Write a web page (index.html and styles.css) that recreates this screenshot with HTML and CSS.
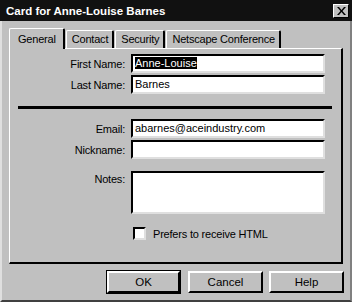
FILE: index.html
```html
<html>
	<head>
		<meta name="viewport" content="width=device-width, initial-scale=1">
		<link rel="stylesheet" href="styles.css">
	</head>
	<body>
		<div class="window">
			<div class="titlebar">
				<span class="title">Card for Anne-Louise Barnes</span>
				<span class="close">
					<svg width="9" height="8" viewBox="0 0 9 8"><path d="M0 0h2l2.5 3 2.5-3h2L5.5 4 9 8H7L4.5 5 2 8H0l3.5-4z" fill="#000"/></svg>
				</span>
			</div>

			<div class="tabs">
				<div class="tab active">General</div>
				<div class="tab">Contact</div>
				<div class="tab">Security</div>
				<div class="tab">Netscape Conference</div>
			</div>

			<div class="panel">
				<div class="fields">
					<label>First Name:</label>
					<div class="input"><span class="selected">Anne-Louise</span></div>
					<label>Last Name:</label>
					<div class="input">Barnes</div>
				</div>

				<div class="rule"></div>

				<div class="fields">
					<label>Email:</label>
					<div class="input">abarnes@aceindustry.com</div>
					<label>Nickname:</label>
					<div class="input"></div>
				</div>

				<div class="fields notes">
					<label>Notes:</label>
					<div class="input textarea"></div>
				</div>

				<div class="check">
					<span class="box"></span>
					<span>Prefers to receive HTML</span>
				</div>
			</div>

			<div class="buttons">
				<button class="default">OK</button>
				<button>Cancel</button>
				<button>Help</button>
			</div>
		</div>
	</body>
</html>
```

FILE: styles.css
```css
* {
	box-sizing: border-box;
	font-family: "Liberation Sans", Arial, sans-serif;
}

body
{
	margin: 0;
	background: #c0c0c0;
}

.window
{
	width: 352px;
	height: 302px;
	background: #c0c0c0;
	border-left: 2px solid #dfdfdf;
	border-right: 2px solid #808080;
	border-bottom: 2px solid #404040;
}

.titlebar
{
	height: 21px;
	background: #111;
	display: flex;
	align-items: center;
	justify-content: space-between;
	padding: 0 3px 0 4px;
	margin-left: -2px;
	margin-right: -2px;
}

.title
{
	color: #fff;
	font-weight: bold;
	font-size: 11.5px;
	padding-left: 2px;
}

.close
{
	width: 16px;
	height: 14px;
	background: #c0c0c0;
	border: 1px solid;
	border-color: #fff #000 #000 #fff;
	display: flex;
	align-items: center;
	justify-content: center;
}

.tabs
{
	display: flex;
	align-items: flex-end;
	margin-top: 7px;
	padding-left: 7px;
	height: 20px;
}

.tab
{
	font-size: 11px;
	letter-spacing: -0.2px;
	height: 18px;
	padding: 2px 4px 0 5px;
	margin-right: 1px;
	border: 1px solid #fff;
	border-right: 2px solid #000;
	border-bottom: 0;
	border-radius: 2px 2px 0 0;
	color: #000;
}

.tab.active
{
	height: 21px;
	padding: 4px 7px 0 8px;
	margin-bottom: -1px;
	background: #c0c0c0;
	position: relative;
}

.panel
{
	margin-left: 7px;
	width: 334px;
	height: 216px;
	border: 1px solid #fff;
	border-right: 2px solid #000;
	border-bottom: 2px solid #000;
	padding-top: 5px;
}

.fields
{
	display: grid;
	grid-template-columns: 115px 194px;
	column-gap: 6px;
	row-gap: 2px;
	align-items: center;
}

.fields label
{
	font-size: 11px;
	letter-spacing: -0.2px;
	text-align: right;
}

.input
{
	height: 19px;
	background: #fff;
	border: 2px solid;
	border-color: #000 #dfdfdf #dfdfdf #000;
	font-size: 11px;
	padding: 0 2px;
	line-height: 15px;
	white-space: nowrap;
}

.selected
{
	background: #000;
	color: #fff;
}

.rule
{
	height: 3px;
	background: #000;
	margin: 12px 9px 10px 8px;
}

.notes
{
	margin-top: 12px;
	align-items: start;
}

.notes label
{
	padding-top: 2px;
}

.input.textarea
{
	height: 43px;
}

.check
{
	display: flex;
	align-items: center;
	gap: 7px;
	margin: 13px 0 0 123px;
	font-size: 11px;
	letter-spacing: -0.2px;
}

.box
{
	width: 13px;
	height: 13px;
	background: #fff;
	border: 2px solid;
	border-color: #000 #dfdfdf #dfdfdf #000;
}

.buttons
{
	display: flex;
	justify-content: flex-end;
	gap: 6px;
	margin-top: 7px;
	padding-right: 6px;
}

button
{
	width: 75px;
	height: 22px;
	background: #c0c0c0;
	font-size: 11.5px;
	color: #000;
	border: 2px solid;
	border-color: #fff #000 #000 #fff;
	padding: 0;
}

button.default
{
	width: 73px;
	outline: 1px solid #000;
	margin-right: 2px;
}
```
